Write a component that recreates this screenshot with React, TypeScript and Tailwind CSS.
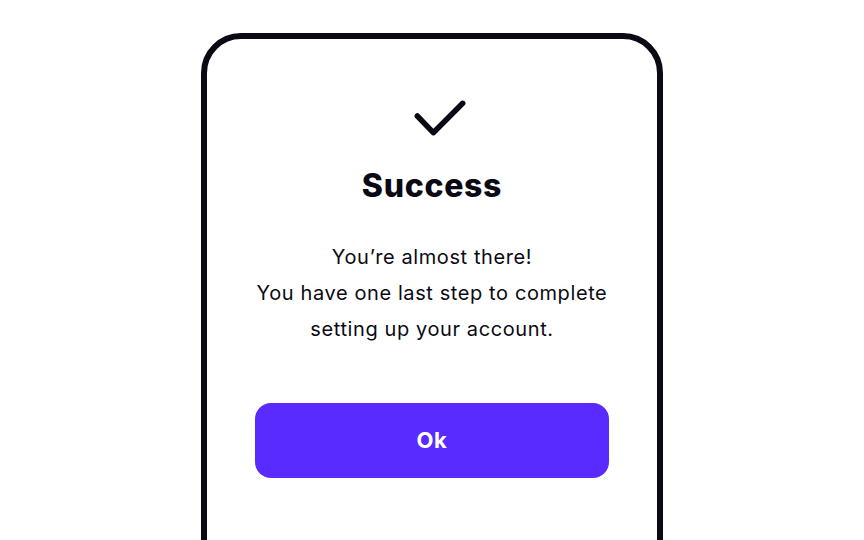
import React from "react";

// Success dialog card
export default function App() {
  return (
    <div
      className="flex min-h-screen justify-center bg-white pt-[33px]"
      style={{ fontFamily: "Inter, 'Noto Sans', sans-serif" }}
    >
      <div className="flex h-[560px] w-[462px] flex-col items-center rounded-[40px] border-[6px] border-[#0b0a14] pt-[57px]">
        <svg width="80" height="40" viewBox="0 0 80 40" fill="none">
          <path
            d="M25.3 20 L41.3 36.7 L70.7 7.3"
            stroke="#0b0a14"
            strokeWidth="5.5"
            strokeLinecap="round"
            strokeLinejoin="round"
          />
        </svg>
        <h1 className="mt-[30px] text-[32px] font-extrabold leading-[40px] tracking-[0.7px] text-[#0b0a14]">
          Success
        </h1>
        <p className="mt-[33px] text-center text-[20px] leading-[36px] tracking-[0.6px] text-[#0b0a14]">
          You’re almost there!
          <br />
          You have one last step to complete
          <br />
          setting up your account.
        </p>
        <button className="mt-[56px] h-[75px] w-[354px] rounded-[16px] bg-[#5a2bff] text-[22px] font-bold tracking-[0.6px] text-white">
          Ok
        </button>
      </div>
    </div>
  );
}
